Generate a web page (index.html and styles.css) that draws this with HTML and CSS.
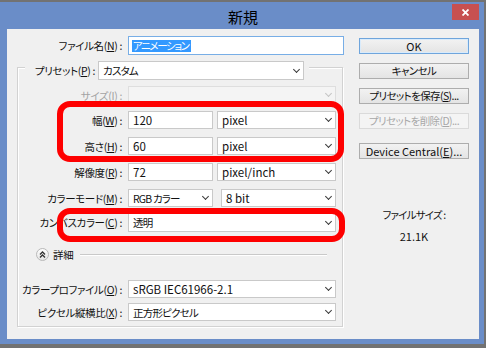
FILE: index.html
```html
<!DOCTYPE html>
<html lang="ja">
<head>
    <meta charset="UTF-8">
    <meta name="viewport" content="width=device-width, initial-scale=1.0">
    <title>新規</title>
    <link rel="stylesheet" href="styles.css">
</head>
<body>

    <div class="window">
        <!-- Title bar -->
        <div class="titlebar">
            <span class="title">新規</span>
            <span class="close-btn">
                <svg width="7" height="7" viewBox="0 0 7 7"><path d="M0.5 0.5L6.5 6.5M6.5 0.5L0.5 6.5" stroke="#fff" stroke-width="1.8"/></svg>
            </span>
        </div>

        <div class="client">
            <!-- Form -->
            <div class="form">
                <div class="row name-row">
                    <label class="lbl">ファイル名(<u>N</u>) :</label>
                    <div class="field focus"><span class="selected">アニメーション</span></div>
                </div>

                <div class="group">
                    <div class="group-head">
                        <label class="lbl">プリセット(<u>P</u>) :</label>
                        <div class="field select preset jp">カスタム</div>
                    </div>

                    <div class="row gap-6">
                        <label class="lbl disabled">サイズ(<u>I</u>) :</label>
                        <div class="field select off"></div>
                    </div>

                    <div class="mark mark-size gap-7">
                        <div class="row">
                            <label class="lbl">幅(<u>W</u>) :</label>
                            <div class="pair">
                                <div class="field num">120</div>
                                <div class="field select">pixel</div>
                            </div>
                        </div>
                        <div class="row gap-8">
                            <label class="lbl">高さ(<u>H</u>) :</label>
                            <div class="pair">
                                <div class="field num">60</div>
                                <div class="field select">pixel</div>
                            </div>
                        </div>
                    </div>

                    <div class="row gap-8">
                        <label class="lbl">解像度(<u>R</u>) :</label>
                        <div class="pair">
                            <div class="field num">72</div>
                            <div class="field select">pixel/inch</div>
                        </div>
                    </div>

                    <div class="row gap-8">
                        <label class="lbl">カラーモード(<u>M</u>) :</label>
                        <div class="pair wide-gap">
                            <div class="field select num jp">RGB カラー</div>
                            <div class="field select">8 bit</div>
                        </div>
                    </div>

                    <div class="mark mark-canvas gap-6">
                        <div class="row tall">
                            <label class="lbl">カンバスカラー(<u>C</u>) :</label>
                            <div class="field select jp">透明</div>
                        </div>
                    </div>

                    <div class="detail">
                        <span class="toggle">
                            <svg width="11" height="11" viewBox="0 0 11 11"><path d="M3 5.5L5.5 3L8 5.5M3 8.5L5.5 6L8 8.5" fill="none" stroke="#333" stroke-width="1.3"/></svg>
                        </span>
                        <span class="lbl">詳細</span>
                        <span class="rule"></span>
                    </div>

                    <div class="row gap-19">
                        <label class="lbl">カラープロファイル(<u>O</u>) :</label>
                        <div class="field select">sRGB IEC61966-2.1</div>
                    </div>

                    <div class="row gap-5">
                        <label class="lbl">ピクセル縦横比(<u>X</u>) :</label>
                        <div class="field select jp">正方形ピクセル</div>
                    </div>
                </div>
            </div>

            <!-- Buttons -->
            <div class="side">
                <div class="btn default">OK</div>
                <div class="btn jp">キャンセル</div>
                <div class="btn jp">プリセットを保存(<u>S</u>)...</div>
                <div class="btn jp off">プリセットを削除(<u>D</u>)...</div>
                <div class="btn device">Device Central(<u>E</u>)...</div>

                <p class="size-label">ファイルサイズ :</p>
                <p class="size-value">21.1K</p>
            </div>
        </div>
    </div>

</body>
</html>
```

FILE: styles.css
```css
/* Reset */
* {
    margin: 0;
    padding: 0;
    box-sizing: border-box;
}

body {
    background: #727272;
    font-family: "Noto Sans CJK JP", "Noto Sans", sans-serif;
    font-size: 11px;
    font-feature-settings: "palt" 1;
    color: #111;
    height: 348px;
    overflow: hidden;
    padding: 2px 2px 4px 0;
}

u {
    text-decoration: underline;
    text-underline-offset: 1px;
}

/* Window frame */
.window {
    height: 342px;
    background: #6a8dc8;
    padding: 0 5px 5px 7px;
    display: flex;
    flex-direction: column;
}

.titlebar {
    height: 27px;
    display: grid;
    grid-template-columns: 1fr auto 1fr;
}

.title {
    grid-column: 2;
    align-self: center;
    font-size: 15px;
    color: #000;
    line-height: 1;
    margin-top: 1px;
}

.close-btn {
    grid-column: 3;
    justify-self: end;
    width: 27px;
    height: 16px;
    margin-top: 2px;
    background: #c75050;
    display: flex;
    justify-content: center;
    align-items: center;
}

.client {
    flex: 1;
    background: #f0f0f0;
    display: flex;
    padding: 7px 10px 0 10px;
}

/* Form */
.form {
    width: 326px;
}

.row {
    display: grid;
    grid-template-columns: 106px 1fr;
    column-gap: 4px;
    align-items: center;
    height: 18px;
}

.row.tall {
    height: 19px;
}

.name-row {
    padding-left: 1px;
    height: 19px;
}

.gap-5 { margin-top: 5px; }
.gap-6 { margin-top: 6px; }
.gap-7 { margin-top: 7px; }
.gap-8 { margin-top: 8px; }
.gap-19 { margin-top: 19px; }

.lbl {
    text-align: right;
    white-space: nowrap;
    padding-right: 2px;
    font-size: 10.5px;
    letter-spacing: -0.35px;
}

.lbl.disabled {
    color: #a3a3a3;
}

.field {
    height: 100%;
    background: #fff;
    border: 1px solid #c9c9c9;
    display: flex;
    align-items: center;
    padding: 0 3px 0 4px;
    white-space: nowrap;
    font-size: 11.5px;
}

.field.jp {
    font-size: 10.5px;
    letter-spacing: -0.8px;
}

.field.focus {
    width: 216px;
    border-color: #78aee6;
    padding-left: 3px;
}

.selected {
    background: #3399ff;
    color: #fff;
    font-size: 10.5px;
    letter-spacing: -1.4px;
    line-height: 12px;
    padding: 0 2px 0 1px;
}

.select::after {
    content: '';
    width: 4px;
    height: 4px;
    margin: -3px 1px 0 auto;
    border-right: 1.4px solid #3a3a3a;
    border-bottom: 1.4px solid #3a3a3a;
    transform: rotate(45deg);
}

.select.off {
    background: #f4f4f4;
    border-color: #dedede;
}

.select.off::after {
    border-color: #c4c4c4;
}

.pair {
    height: 100%;
    display: flex;
    gap: 4px;
}

.pair.wide-gap {
    gap: 8px;
}

.pair .field {
    flex: 1;
}

.pair .field.num {
    flex: 0 0 85px;
}

/* Group box */
.group {
    margin-top: 12px;
    border: 1px solid #d2d2d2;
    box-shadow: inset 1px 1px 0 #fff, 1px 1px 0 #fff;
    padding: 0 6px 5px 0;
}

.group-head {
    width: 284px;
    height: 19px;
    margin: -7px 0 0 7px;
    padding-right: 5px;
    background: #f0f0f0;
    display: flex;
    justify-content: flex-end;
    align-items: center;
    gap: 1px;
}

.preset {
    flex: 0 0 206px;
}

/* Red highlight marks */
.mark {
    position: relative;
}

.mark::after {
    content: '';
    position: absolute;
    border: 6px solid #fe0000;
    border-radius: 13px;
}

.mark-size::after {
    top: -10px;
    bottom: -7px;
    left: 39px;
    right: -8px;
}

.mark-canvas::after {
    top: -5px;
    bottom: -10px;
    left: 39px;
    right: -9px;
}

/* Detail toggle */
.detail {
    margin-top: 15px;
    height: 14px;
    display: flex;
    align-items: center;
    gap: 4px;
    padding-left: 18px;
}

.toggle {
    width: 13px;
    height: 13px;
    border-radius: 50%;
    border: 1px solid #b9b9b9;
    background: linear-gradient(#fdfdfd, #e6e6e6);
    display: flex;
    justify-content: center;
    align-items: center;
}

.rule {
    flex: 1;
    height: 1px;
    background: #c9c9c9;
    box-shadow: 0 1px 0 #fff;
    margin: 0 9px 0 1px;
}

/* Side buttons */
.side {
    width: 110px;
    margin-left: 16px;
    padding-top: 2px;
    text-align: center;
}

.btn {
    height: 16px;
    margin-bottom: 9px;
    border: 1px solid #adadad;
    background: linear-gradient(#f2f2f2, #e4e4e4);
    font-size: 11px;
    line-height: 14px;
    white-space: nowrap;
}

.btn.jp {
    font-size: 10.5px;
    letter-spacing: -0.6px;
}

.btn.default {
    border-color: #6fa5dc;
    box-shadow: inset 0 0 0 1px #d9ebfb;
}

.btn.off {
    color: #a8a8a8;
    border-color: #dadada;
    background: #f4f4f4;
}

.btn.device {
    margin-top: 14px;
}

.size-label {
    margin-top: 49px;
    line-height: 14px;
    font-size: 10.5px;
    letter-spacing: -0.8px;
}

.size-value {
    margin-top: 7px;
    line-height: 14px;
}
```
